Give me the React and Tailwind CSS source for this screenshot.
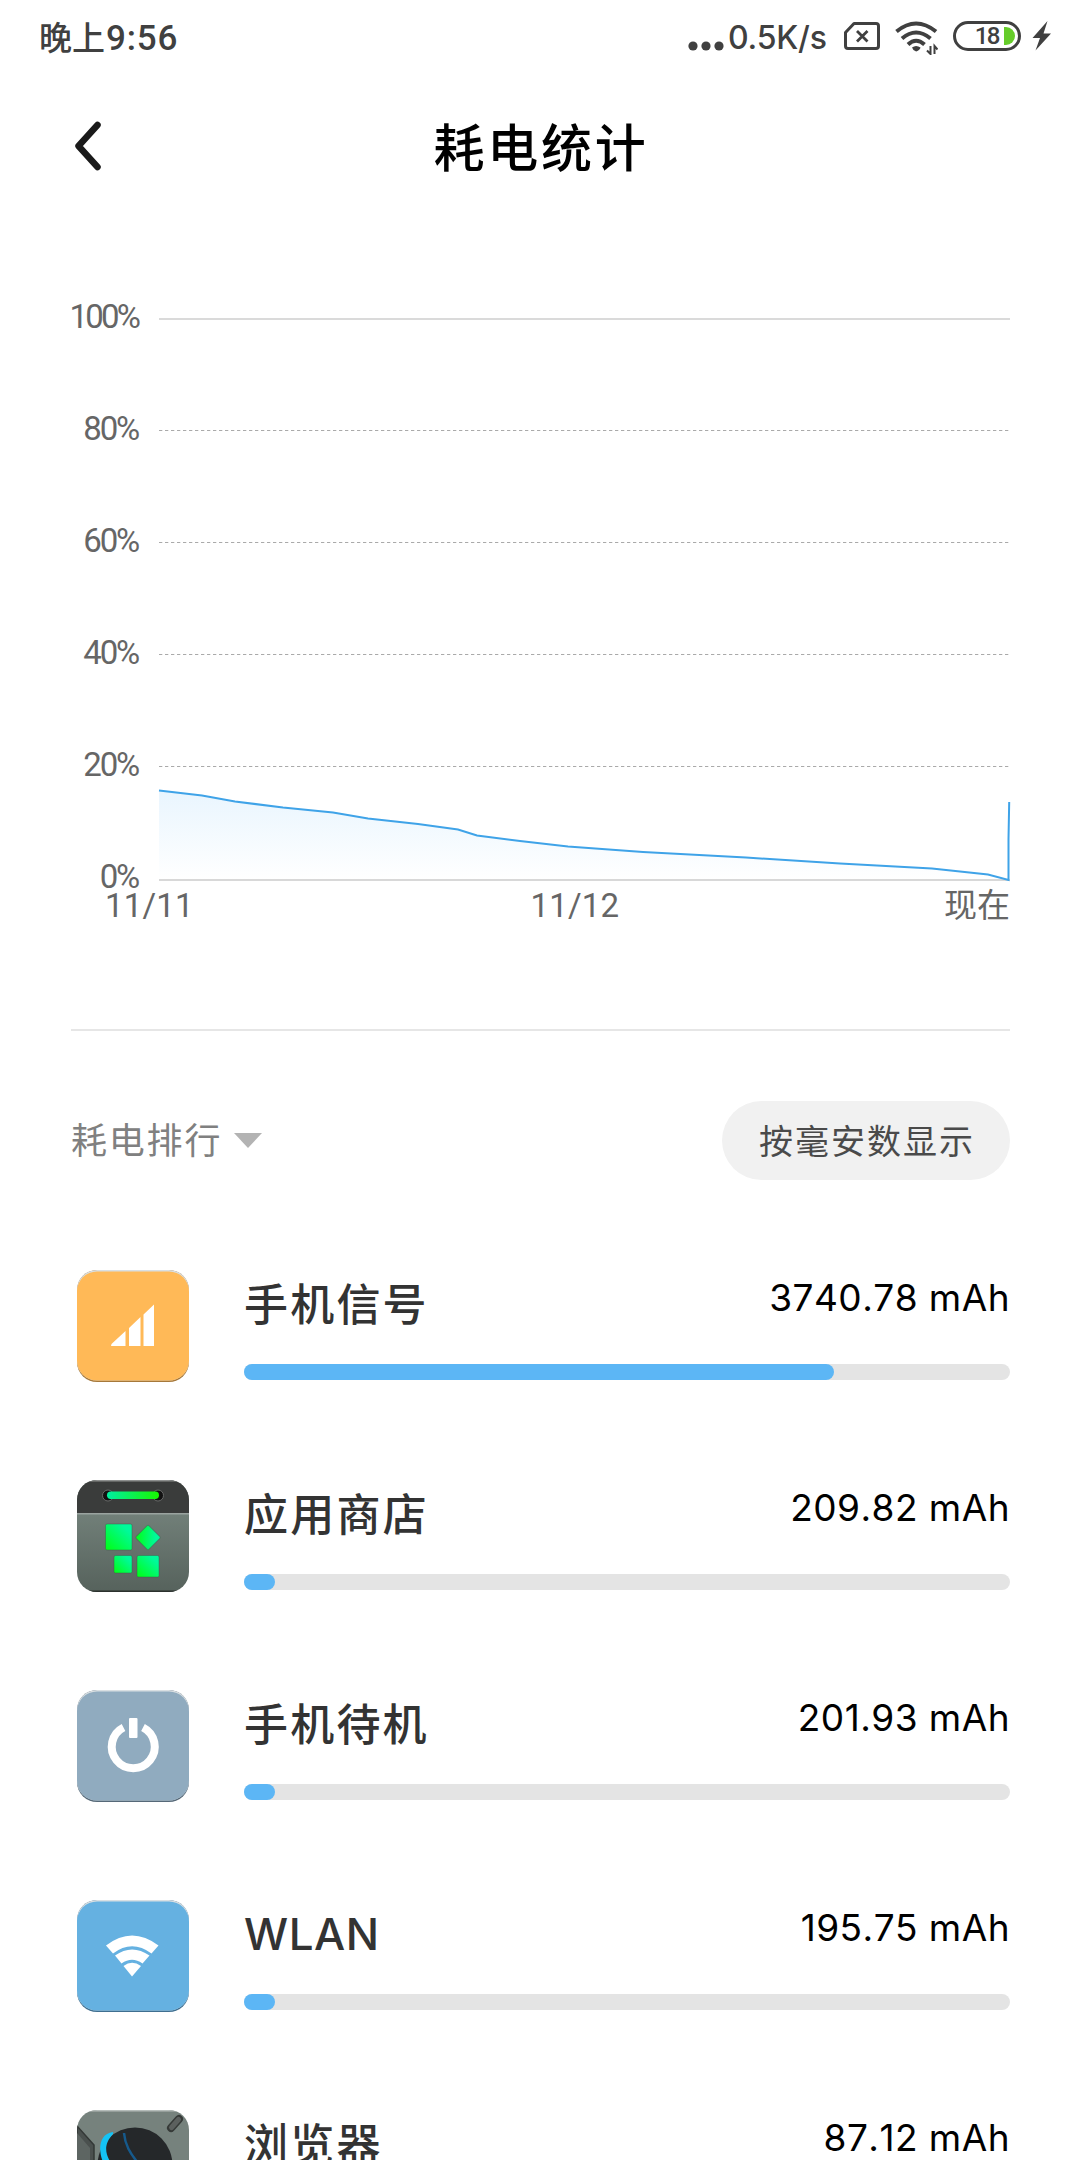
import React from 'react';

const LEVELS = ['100%', '80%', '60%', '40%', '20%', '0%'];

// battery level curve, in chart coordinates (plot area starts at the 100% line)
const CURVE = [
    [0, 471.5], [43, 476.5], [76, 482.5], [124, 488.5], [174, 493.5], [209, 499.5], [259, 505],
    [299, 510.5], [318, 516.5], [361, 522], [409, 527.5], [484, 533], [587, 538.5], [681, 544.5],
    [773, 549.5], [829, 555.5], [849.5, 561],
];

const Chart = () => {
    const points = CURVE.map((p) => p.join(',')).join(' ');
    return (
        <svg width="851" height="564" viewBox="0 0 851 564" fill="none" className="overflow-visible">
            <defs>
                <linearGradient id="area" x1="0" y1="471" x2="0" y2="561" gradientUnits="userSpaceOnUse">
                    <stop offset="0" stopColor="#e9f5fe" />
                    <stop offset="1" stopColor="#ffffff" />
                </linearGradient>
            </defs>
            <path d="M0 0H851" stroke="#dadada" strokeWidth="2" />
            {[112, 224, 336, 448].map((y) => (
                <path key={y} d={`M0 ${y - 0.5}H851`} stroke="#aaaaaa" strokeWidth="1" strokeDasharray="3.3 2.7" />
            ))}
            <polygon points={`0,561 ${points}`} fill="url(#area)" />
            <path d="M0 561H851" stroke="#d8d8d8" strokeWidth="2" />
            <polyline points={`${points} 849.5,520 850.2,483`} stroke="#3fa3e8" strokeWidth="2" />
        </svg>
    );
};

const TileBase = ({ color, edge }) => (
    <>
        <rect width="112" height="112" rx="20" fill={edge} />
        <rect width="112" height="110.5" rx="20" fill="#d9dfe2" />
        <rect y="1.5" width="112" height="109" rx="20" fill={color} />
    </>
);

const SignalIcon = () => (
    <svg width="112" height="112" viewBox="0 0 112 112">
        <TileBase color="#ffb957" edge="#a6783a" />
        <path d="M34 76L34.5 74L48.5 61V76ZM52 76V58L63.500 47V76ZM66.500 76V44.500L77 34.500V76Z" fill="#fff" />
    </svg>
);

const StoreIcon = () => (
    <svg width="112" height="112" viewBox="0 0 112 112">
        <defs>
            <clipPath id="storeClip"><rect width="112" height="112" rx="20" /></clipPath>
            <linearGradient id="storeBody" x1="0" y1="0" x2="0" y2="1">
                <stop offset="0" stopColor="#7d8c85" />
                <stop offset="1" stopColor="#56625c" />
            </linearGradient>
            <linearGradient id="storeGreen" x1="0" y1="1" x2="1" y2="0">
                <stop offset="0" stopColor="#00ff12" />
                <stop offset="0.8" stopColor="#00f99b" />
            </linearGradient>
            <linearGradient id="storeBar">
                <stop offset="0" stopColor="#00f0a0" />
                <stop offset="1" stopColor="#18f500" />
            </linearGradient>
        </defs>
        <g clipPath="url(#storeClip)">
            <rect width="112" height="112" fill="url(#storeBody)" />
            <rect width="112" height="33" fill="#3a3c3b" />
            <rect width="112" height="1.500" fill="#8d8f8e" />
            <rect y="33" width="112" height="1.500" fill="#9aa39f" />
            <rect y="110.500" width="112" height="1.500" fill="#2b302d" />
        </g>
        <circle cx="31" cy="15.500" r="5.500" fill="#111" stroke="#686a69" />
        <circle cx="81" cy="15.500" r="5.500" fill="#111" stroke="#686a69" />
        <rect x="30" y="11.500" width="52" height="7.500" rx="3.700" fill="url(#storeBar)" />
        <g fill="url(#storeGreen)" stroke="#3d5a4a" strokeOpacity="0.45">
            <rect x="28.500" y="44" width="26.500" height="26" rx="1.500" />
            <rect x="62" y="48.500" width="18" height="18" rx="1.500" transform="rotate(45 71 57.500)" />
            <rect x="37" y="75.500" width="18" height="17.500" rx="1.500" />
            <rect x="60" y="75.500" width="22" height="21.500" rx="1.500" />
        </g>
    </svg>
);

const PowerIcon = () => (
    <svg width="112" height="112" viewBox="0 0 112 112">
        <TileBase color="#90abbf" edge="#566978" />
        <path d="M46.500 37.500A21.500 21.500 0 1 0 66 37.500" fill="none" stroke="#fff" strokeWidth="8" />
        <rect x="52" y="28" width="8.500" height="20" rx="1" fill="#fff" />
    </svg>
);

const WlanIcon = () => (
    <svg width="112" height="112" viewBox="0 0 112 112">
        <TileBase color="#65b1e1" edge="#3f6f90" />
        <path d="M29 45.500Q55 25.500 81.500 45.500L74.500 53.500Q55 39 36 53.500Z" fill="#fff" />
        <path d="M38 55.500Q55 43.500 72.500 55.500L65.500 63.500Q55 56 44.500 63.500Z" fill="#fff" />
        <path d="M46.500 66Q55 59.500 64 66L55 76.500Z" fill="#fff" />
    </svg>
);

const BrowserIcon = () => (
    <svg width="112" height="112" viewBox="0 0 112 112">
        <defs>
            <clipPath id="browserClip"><rect width="112" height="112" rx="20" /></clipPath>
        </defs>
        <g clipPath="url(#browserClip)">
            <rect width="112" height="112" fill="#76827d" />
            <rect width="112" height="1.500" fill="#b5bcb9" />
            <path d="M0 16L17 35V60H0Z" fill="#4a504e" stroke="#333836" strokeWidth="1.500" />
            <path d="M0 23L13 38V60H0Z" fill="#5d6562" />
            <path d="M94 18L102 9" stroke="#363a38" strokeWidth="8" strokeLinecap="round" />
            <path d="M94.500 17.500L101.500 9.500" stroke="#5b605e" strokeWidth="5" strokeLinecap="round" />
            <circle cx="58" cy="55" r="37.500" fill="#25282a" />
            <path d="M36 24C25 36 29 46 36 56L28 56C21 44 20 24 36 22Z" fill="#14c3f5" />
            <path d="M47 23C48 35 53 43 61 53" fill="none" stroke="#165a8c" strokeWidth="2.500" />
        </g>
    </svg>
);

const APPS = [
    { name: '手机信号', usage: '3740.78 mAh', width: 590, Icon: SignalIcon },
    { name: '应用商店', usage: '209.82 mAh', width: 31, Icon: StoreIcon },
    { name: '手机待机', usage: '201.93 mAh', width: 31, Icon: PowerIcon },
    { name: 'WLAN', usage: '195.75 mAh', width: 31, Icon: WlanIcon, nameClass: 'mt-[12px] tracking-[0.5px]' },
    { name: '浏览器', usage: '87.12 mAh', width: 31, Icon: BrowserIcon },
];

const StatusBar = () => (
    <div className="flex h-[76px] shrink-0 items-center justify-between pr-[29px] pl-[39px] text-[#404040]">
        <div className="flex items-center leading-none font-medium">
            <span className="text-[33px]">晚上</span>
            <span className="ml-[1px] text-[35px] tracking-[0.800px]">9:56</span>
        </div>
        <div className="flex items-center">
            <svg width="36" height="10" viewBox="0 0 36 10" className="mt-[16px] mr-[4px]" fill="#404040">
                <circle cx="5" cy="5" r="4.600" />
                <circle cx="18" cy="5" r="4.600" />
                <circle cx="31" cy="5" r="4.600" />
            </svg>
            <span className="mr-[17px] w-[99px] font-[Inter] text-[32px] leading-none font-medium tracking-[-0.200px] whitespace-nowrap">0.5K/s</span>
            <svg width="36" height="28" viewBox="0 0 36 28" fill="none" stroke="#404040" className="mt-[-4px] mr-[15px]">
                <path d="M10 1.500H32A2.500 2.500 0 0 1 34.500 4V24A2.500 2.500 0 0 1 32 26.500H4A2.500 2.500 0 0 1 1.500 24V10.500Z" strokeWidth="3" strokeLinejoin="round" />
                <path d="M13 9L23.500 19.500M23.500 9L13 19.500" strokeWidth="2.800" />
            </svg>
            <svg width="43" height="34" viewBox="0 0 43 34" fill="none" stroke="#404040" strokeWidth="4" className="mt-[-1px] mr-[15px]">
                <path d="M1.500 10.500Q21 -5.500 41 10.500" />
                <path d="M7 17.500Q21 5.500 35.500 17.500" />
                <path d="M13 23.500Q21 16 29.500 23.500" />
                <path d="M17 26.500Q21 23.500 25.500 26.500Q25 29 21.200 30.500Q17.500 29 17 26.500Z" fill="#404040" stroke="none" />
                <path d="M35.500 25V33L32 29.500M39.500 33V25L42.500 28.500" strokeWidth="2" />
            </svg>
            <div className="mt-[-4px] flex h-[30px] w-[68px] items-center justify-end rounded-full border-[3px] border-[#404040] pr-[3px]">
                <span className="mr-[5px] text-[24px] leading-none font-medium tracking-[-1.500px]">18</span>
                <div className="h-[18px] w-[11px] rounded-r-full bg-[#66cc2a]"></div>
            </div>
            <svg width="19" height="30" viewBox="0 0 19 30" className="mt-[-4px] ml-[11px]" fill="#404040">
                <path d="M15.500 0L0.500 17H8L3.500 29.500L19 12.500H11.500Z" />
            </svg>
        </div>
    </div>
);

const AppRow = ({ name, usage, width, Icon, nameClass = 'mt-[13px] tracking-[2.200px]' }) => (
    <div className="flex h-[210px] shrink-0 pl-[6px]">
        <Icon />
        <div className="ml-[55px] flex-1">
            <div className="flex h-[94px] justify-between">
                <span className={`font-[Inter,'Noto_Sans_CJK_SC',sans-serif] text-[44px] leading-[44px] font-medium text-[#333] ${nameClass}`}>{name}</span>
                <span className="mt-[8px] font-[Inter] text-[37px] leading-[40px] tracking-[0.450px] text-black [font-kerning:none]">{usage}</span>
            </div>
            <div className="h-[16px] rounded-full bg-[#e4e4e4]">
                <div className="h-full rounded-full bg-[#5cb6f5]" style={{ width }}></div>
            </div>
        </div>
    </div>
);

export default function App() {
    return (
        <div className="flex h-[2160px] w-[1080px] flex-col overflow-hidden bg-white font-[Roboto,'Noto_Sans_CJK_SC',sans-serif]">
            <StatusBar />

            <header className="flex h-[144px] shrink-0 items-center px-[72px]">
                <svg width="32" height="52" viewBox="0 0 32 52" fill="none" className="mt-[-4px]">
                    <path d="M25.500 5L6.500 26L25.500 47" stroke="#1a1a1a" strokeWidth="6.500" strokeLinecap="round" strokeLinejoin="round" />
                </svg>
                <h1 className="mt-[3px] mr-[30px] flex-1 text-center text-[51px] leading-[60px] font-medium tracking-[2.800px] text-black">耗电统计</h1>
            </header>

            <main className="pr-[70px] pl-[71px]">
                <div className="flex pt-[99px]">
                    <div className="flex w-[68px] flex-col items-end text-[33px] tracking-[-2.200px] text-[#666]">
                        {LEVELS.map((level) => (
                            <div key={level} className="-mt-[22px] mb-[22px] h-[112px] pr-[1px] leading-[40px] first:tracking-[-2.800px] last:h-[4px]">{level}</div>
                        ))}
                    </div>
                    <div className="ml-[20px] h-[564px]">
                        <Chart />
                    </div>
                </div>
                <div className="flex h-[46px] justify-between pl-[34px] text-[33px] leading-[46px] text-[#666]">
                    <span className="w-[112px] tracking-[0.200px]">11/11</span>
                    <span className="w-[100px] tracking-[0.200px]">11/12</span>
                    <span>现在</span>
                </div>
                <div className="mt-[100px] h-[2px] bg-[#e6e6e6]"></div>

                <div className="mt-[70px] flex h-[79px] items-center justify-between">
                    <div className="flex items-center">
                        <span className="mt-[3px] text-[36px] leading-none tracking-[1.800px] text-[#808080]">耗电排行</span>
                        <svg width="28" height="15" viewBox="0 0 28 15" className="ml-[12px]">
                            <path d="M0 0H28L14 15Z" fill="#b3b3b3" />
                        </svg>
                    </div>
                    <button className="h-[79px] w-[288px] rounded-full bg-[#f1f1f1] pt-[3px] pl-[2px] text-[34px] tracking-[2px] text-[#4a4a4a]">按毫安数显示</button>
                </div>

                <div className="mt-[90px] flex flex-col">
                    {APPS.map((app) => (
                        <AppRow key={app.name} {...app} />
                    ))}
                </div>
            </main>
        </div>
    );
}
